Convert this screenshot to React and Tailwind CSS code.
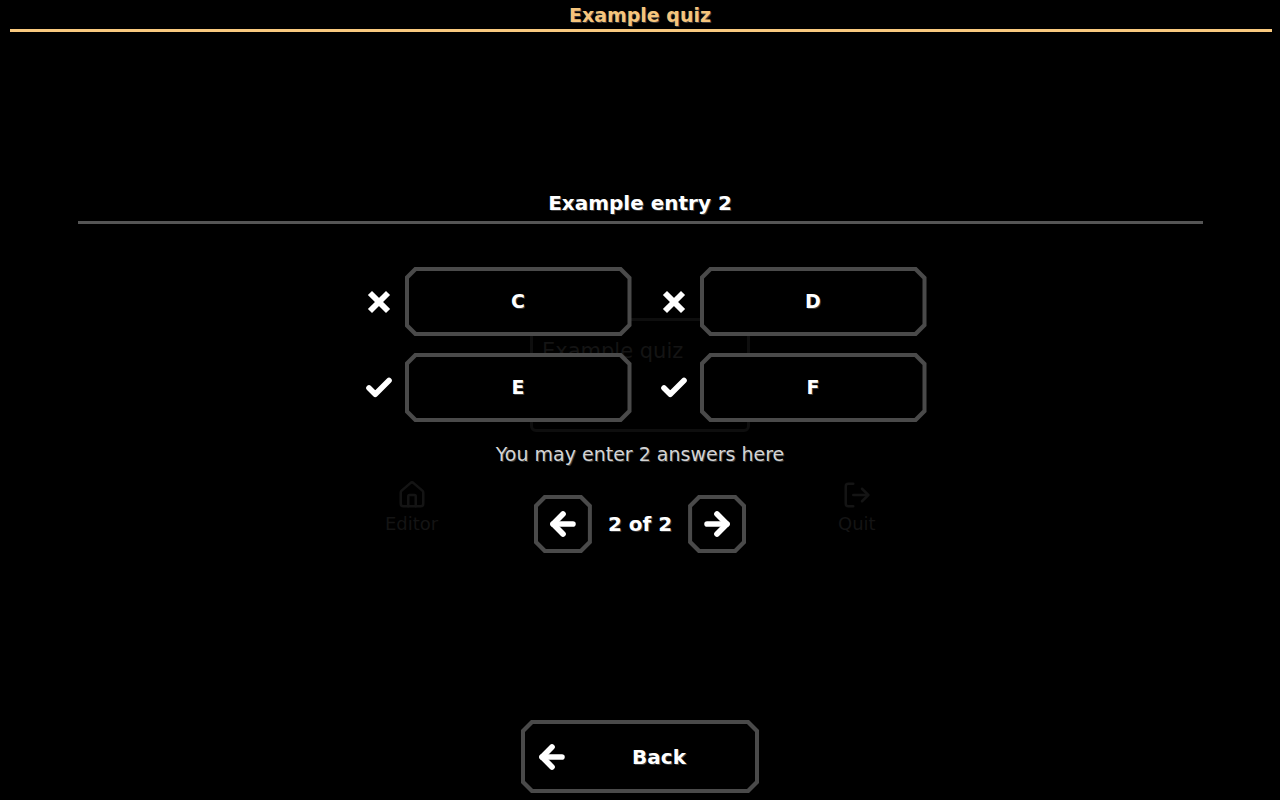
import React from 'react';
import { ArrowLeft, ArrowRight, X, Check, Home, LogOut } from 'lucide-react';

const font = "font-['DejaVu_Sans',sans-serif]";
const shadow = '[text-shadow:1px_1px_0_#3a3a3a]';
const chamfer =
  '[clip-path:polygon(10px_0,calc(100%_-_10px)_0,100%_10px,100%_calc(100%_-_10px),calc(100%_-_10px)_100%,10px_100%,0_calc(100%_-_10px),0_10px)]';
const chamferIn =
  '[clip-path:polygon(8px_0,calc(100%_-_8px)_0,100%_8px,100%_calc(100%_-_8px),calc(100%_-_8px)_100%,8px_100%,0_calc(100%_-_8px),0_8px)]';

// gray frame with cut corners, black inside
const Frame = ({ className = '', children }) => (
  <div className={`shrink-0 bg-[#4a4a4a] p-[4px] ${chamfer} ${className}`}>
    <div className={`w-full h-full bg-black flex items-center ${chamferIn}`}>{children}</div>
  </div>
);

const answers = [
  { label: 'C', ok: false },
  { label: 'D', ok: false },
  { label: 'E', ok: true },
  { label: 'F', ok: true },
];

const App = () => {
  return (
    <div className={`relative w-[1280px] h-[800px] bg-black overflow-hidden ${font}`}>
      {/* faint menu left behind the overlay */}
      <div className="absolute inset-0 text-[#141414]">
        <div className="absolute left-[530px] top-[318px] w-[220px] h-[114px] border-[3px] border-[#0e0e0e] rounded-md" />
        <div className="absolute left-[542px] top-[336px] text-[21px]">Example quiz</div>
        <div className="absolute left-[385px] top-[480px] flex flex-col items-center">
          <Home size={30} strokeWidth={2} />
          <span className="text-[18px]">Editor</span>
        </div>
        <div className="absolute left-[838px] top-[480px] flex flex-col items-center">
          <LogOut size={30} strokeWidth={2} />
          <span className="text-[18px]">Quit</span>
        </div>
      </div>

      <div className="relative flex flex-col items-center">
        <h1 className={`h-[29px] pt-[2px] text-[19px] font-bold text-[#f6c57c] leading-[26px] ${shadow}`}>
          Example quiz
        </h1>
        <div className="ml-[10px] mr-[8px] self-stretch h-[3px] bg-[#f8c97f]" />

        <h2 className={`mt-[157px] text-[20px] font-bold text-white leading-[28px] ${shadow}`}>
          Example entry 2
        </h2>
        <div className="mt-[4px] w-[1125px] h-[3px] bg-[#555555]" />

        <div className="mt-[43px] ml-[10px] grid grid-cols-2 gap-x-[27px] gap-y-[17px]">
          {answers.map((a) => (
            <div key={a.label} className="flex items-center gap-[11px]">
              <div className="w-[30px] flex justify-center text-white">
                {a.ok ? <Check size={32} strokeWidth={4.5} /> : <X size={28} strokeWidth={5} strokeLinecap="square" />}
              </div>
              <Frame className="w-[227px] h-[69px]">
                <span className={`w-full text-center text-[19px] font-bold text-white ${shadow}`}>{a.label}</span>
              </Frame>
            </div>
          ))}
        </div>

        <p className={`mt-[19px] text-[19px] text-[#d4d4d4] leading-[26px] ${shadow}`}>
          You may enter 2 answers here
        </p>

        <div className="mt-[28px] flex items-center gap-[16px]">
          <Frame className="w-[58px] h-[58px]">
            <ArrowLeft className="mx-auto text-white" size={34} strokeWidth={4} />
          </Frame>
          <span className={`text-[20px] font-bold text-white ${shadow}`}>2 of 2</span>
          <Frame className="w-[58px] h-[58px]">
            <ArrowRight className="mx-auto text-white" size={34} strokeWidth={4} />
          </Frame>
        </div>

        <Frame className="mt-[167px] w-[238px] h-[73px]">
          <div className="w-full flex items-center pl-[10px] pr-[6px]">
            <ArrowLeft className="text-white" size={34} strokeWidth={4} />
            <span className={`flex-1 text-center text-[20px] font-bold text-white ${shadow}`}>Back</span>
          </div>
        </Frame>
      </div>
    </div>
  );
};

export default App;
